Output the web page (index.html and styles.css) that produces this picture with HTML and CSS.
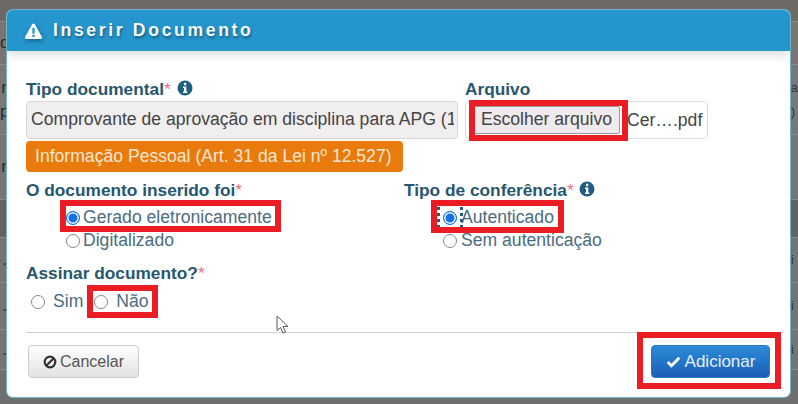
FILE: index.html
```html
<!DOCTYPE html>
<html lang="pt-br">
<head>
    <meta charset="UTF-8">
    <meta name="viewport" content="width=device-width, initial-scale=1.0">
    <title>Inserir Documento</title>
    <link rel="stylesheet" href="styles.css">
</head>
<body>

    <!-- Página escurecida atrás do modal -->
    <div class="page">
        <div class="page-row row-a"></div>
        <div class="page-row row-b"><span class="left-txt">d</span></div>
        <div class="page-row row-c"><span class="left-txt">r<br>p</span><span class="right-txt">a<br>)</span></div>
        <div class="page-row row-d"><span class="left-txt">r</span></div>
        <div class="page-row row-e"></div>
        <div class="page-row row-f"><span class="left-txt">.</span><span class="right-txt">i</span></div>
        <div class="page-row row-g"><span class="left-txt">.</span><span class="right-txt">i</span></div>
        <div class="page-row row-h"><span class="left-txt">.</span><span class="right-txt">i</span></div>
    </div>

    <div class="modal">
        <div class="modal-header">
            <svg class="icon-warning" viewBox="0 0 20 18"><path d="M10 0.5c.7 0 1.200.4 1.500 1l8 14.200c.6 1.100-.1 2.300-1.400 2.300H1.900C.6 18-.1 16.800.5 15.700l8-14.200c.3-.6.800-1 1.500-1z"/><rect class="cut" x="8.700" y="5.500" width="2.600" height="6.500"/><rect class="cut" x="8.700" y="13.300" width="2.600" height="2.600"/></svg>
            <h4>Inserir Documento</h4>
        </div>

        <div class="modal-body">
            <div class="row-top">
                <div class="field-tipo">
                    <label class="field-label">Tipo documental<span class="req">*</span> <svg class="icon-info" viewBox="0 0 16 16"><circle cx="8" cy="8" r="7.500"/><rect class="cut" x="6.900" y="2.800" width="2.400" height="2.400"/><path class="cut" d="M6 6.500h3.300v5h1v1.500H6v-1.500h1v-3.500H6z"/></svg></label>
                    <div class="select-box"><span class="select-text">Comprovante de aprovação em disciplina para APG (1</span></div>
                    <div class="tag-orange">Informação Pessoal (Art. 31 da Lei nº 12.527)</div>
                </div>
                <div class="field-arquivo">
                    <label class="field-label">Arquivo</label>
                    <div class="file-box">
                        <span class="file-btn">Escolher arquivo</span>
                        <span class="file-name">Cer….pdf</span>
                    </div>
                </div>
            </div>

            <div class="row-radios">
                <div class="col-gerado">
                    <label class="field-label">O documento inserido foi<span class="req">*</span></label>
                    <div class="radio-list">
                        <div class="radio-item"><span class="radio checked"></span>Gerado eletronicamente</div>
                        <div class="radio-item"><span class="radio"></span>Digitalizado</div>
                    </div>
                </div>
                <div class="col-conf">
                    <label class="field-label">Tipo de conferência<span class="req">*</span> <svg class="icon-info" viewBox="0 0 16 16"><circle cx="8" cy="8" r="7.500"/><rect class="cut" x="6.900" y="2.800" width="2.400" height="2.400"/><path class="cut" d="M6 6.500h3.300v5h1v1.500H6v-1.500h1v-3.500H6z"/></svg></label>
                    <div class="radio-list list-conf">
                        <div class="radio-item"><span class="radio checked focused"></span>Autenticado</div>
                        <div class="radio-item"><span class="radio"></span>Sem autenticação</div>
                    </div>
                </div>
            </div>

            <div class="field-assinar">
                <label class="field-label">Assinar documento?<span class="req">*</span></label>
                <div class="radio-inline">
                    <span class="radio"></span><span class="txt-sim">Sim</span>
                    <span class="radio radio-nao"></span><span class="txt-nao">Não</span>
                </div>
            </div>
        </div>

        <div class="modal-footer">
            <button class="btn btn-cancel"><svg class="icon-ban" viewBox="0 0 14 14"><circle cx="7" cy="7" r="5.300"/><path d="M3.200 10.800l7.600-7.600"/></svg>Cancelar</button>
            <button class="btn btn-add"><svg class="icon-check" viewBox="0 0 16 14"><path d="M1.800 7.500l4 4L14.200 3"/></svg>Adicionar</button>
        </div>

        <!-- Marcações vermelhas por cima da captura -->
        <div class="mark mark-file"></div>
        <div class="mark mark-gerado"></div>
        <div class="mark mark-autent"></div>
        <div class="mark mark-nao"></div>
        <div class="mark mark-add"></div>

        <!-- Cursor do mouse -->
        <svg class="cursor" viewBox="0 0 14 20"><path d="M1 1v14.500l3.500-3 2.500 5.500 2.500-1-2.500-5.500h5z"/></svg>
    </div>

</body>
</html>
```

FILE: styles.css
```css
/* Geral */
body {
    margin: 0;
    width: 798px;
    height: 404px;
    overflow: hidden;
    background-color: #6f6f6f;
    font-family: "Liberation Sans", Arial, sans-serif;
    position: relative;
}

/* Restos da página atrás do modal */
.page-row {
    display: flex;
    justify-content: space-between;
    align-items: center;
    box-sizing: border-box;
    border-bottom: 1px solid #8a8a8a;
    font-size: 17px;
    line-height: 24px;
    color: #2a2a2a;
}

.left-txt {
    width: 7px;
    text-align: right;
}

.right-txt {
    width: 7px;
    margin-left: auto;
    font-size: 12px;
    color: #333;
}

.row-a { height: 22px; background-color: #6d6966; }
.row-b { height: 43px; background-color: #7a7572; }
.row-c { height: 70px; background-color: #787878; }
.row-d { height: 65px; background-color: #767676; }
.row-e { height: 38px; background-color: #636363; }
.row-f { height: 45px; background-color: #747474; }
.row-g { height: 47px; background-color: #747474; }
.row-h { height: 40px; background-color: #747474; }

/* Modal */
.modal {
    position: absolute;
    left: 7px;
    top: 10px;
    width: 783px;
    height: 387px;
    background-color: #fff;
    border-radius: 6px;
    box-shadow: 0 0 0 1px #6fb4c8;
    overflow: hidden;
}

.modal-header {
    height: 41px;
    background-color: #2596cd;
    box-shadow: 0 4px 10px rgba(0, 0, 0, 0.14);
    display: flex;
    align-items: center;
    padding-left: 17px;
    gap: 10px;
    color: #fff;
}

.modal-header h4 {
    margin: 0;
    font-size: 17.600px;
    font-weight: bold;
    letter-spacing: 2.650px;
    color: #f4f9fc;
    text-shadow: 1px 2px 3px rgba(0, 0, 0, 0.4);
}

.icon-warning {
    width: 19px;
    height: 16px;
    fill: #fff;
    filter: drop-shadow(1px 2px 2px rgba(0, 0, 0, 0.35));
}

.icon-warning .cut {
    fill: #2596cd;
}

.modal-body {
    padding: 29px 19px 0;
}

.field-label {
    display: block;
    font-size: 17.300px;
    font-weight: bold;
    line-height: 18px;
    color: #27566f;
    white-space: nowrap;
}

.req {
    color: #e8707f;
    font-weight: normal;
}

.icon-info {
    width: 16px;
    height: 16px;
    vertical-align: -1px;
    margin-left: 1px;
    fill: #1f5e80;
}

.icon-info .cut {
    fill: #fff;
}

/* Linha de cima */
.row-top {
    display: flex;
    gap: 8px;
}

.field-tipo {
    width: 432px;
}

.select-box {
    box-sizing: border-box;
    height: 38px;
    margin-top: 3px;
    padding: 0 3px 0 4px;
    line-height: 35px;
    font-size: 17.600px;
    color: #444;
    background-color: #f0eeee;
    border: 1px solid #d6d6d6;
    border-radius: 4px;
}

/* O texto do select é cortado antes da borda direita */
.select-text {
    display: block;
    white-space: nowrap;
    overflow: hidden;
}

.tag-orange {
    width: 377px;
    height: 31px;
    margin-top: 2px;
    padding-left: 9px;
    box-sizing: border-box;
    line-height: 30px;
    font-size: 17.600px;
    color: #f6e6d2;
    background-color: #e87b0c;
    border-radius: 4px;
    white-space: nowrap;
}

.field-arquivo {
    width: 243px;
    margin-left: -1px;
}

.file-box {
    box-sizing: border-box;
    width: 243px;
    height: 38px;
    margin-top: 3px;
    display: flex;
    align-items: center;
    padding-left: 7px;
    border: 1px solid #dcdcdc;
    border-radius: 4px;
    font-size: 17.600px;
    color: #444;
}

.file-btn {
    box-sizing: border-box;
    width: 147px;
    height: 28px;
    line-height: 25px;
    text-align: center;
    background-color: #eeeaee;
    border: 1px solid #9a9a9a;
    border-radius: 2px;
    white-space: nowrap;
}

.file-name {
    margin-left: 7px;
    white-space: nowrap;
}

/* Radios */
.row-radios {
    display: flex;
    margin-top: 9px;
}

.col-gerado {
    width: 378px;
}

.radio-list {
    margin-top: 7px;
    padding-left: 40px;
}

.list-conf {
    padding-left: 39px;
}

.list-conf .radio {
    margin-right: 4px;
}

.radio-item {
    display: flex;
    align-items: center;
    height: 23px;
    font-size: 17.600px;
    color: #4c6c80;
    white-space: nowrap;
}

.radio {
    position: relative;
    box-sizing: border-box;
    display: inline-block;
    flex: none;
    width: 14px;
    height: 14px;
    margin-right: 3px;
    border: 1px solid #8a8a8a;
    border-radius: 50%;
    background-color: #fff;
}

.radio.checked {
    border: 1.500px solid #1170e8;
    box-shadow: inset 0 0 0 1.500px #fff;
    background-color: #1170e8;
}

/* Contorno de foco pontilhado do rádio */
.radio.focused::after {
    content: "";
    position: absolute;
    left: -7px;
    top: -5px;
    width: 20px;
    height: 20px;
    border-left: 3px dotted #1f5e80;
    border-right: 3px dotted #1f5e80;
    border-bottom: 1px dotted #999;
}

.field-assinar {
    margin-top: 12px;
}

.radio-inline {
    display: flex;
    align-items: center;
    height: 23px;
    margin-top: 8px;
    padding-left: 5px;
    font-size: 17.600px;
    color: #4c6c80;
}

.txt-sim {
    margin-left: 5px;
}

.radio-nao {
    margin-left: 11px;
}

.txt-nao {
    margin-left: 5px;
}

/* Rodapé */
.modal-footer {
    position: absolute;
    left: 19px;
    right: 20px;
    top: 322px;
    height: 54px;
    border-top: 1px solid #cfcfcf;
    display: flex;
    justify-content: space-between;
    align-items: flex-start;
    padding-top: 12px;
    box-sizing: border-box;
}

.btn {
    height: 33px;
    box-sizing: border-box;
    font-family: inherit;
    border-radius: 4px;
    display: flex;
    align-items: center;
    padding: 0;
    justify-content: center;
}

.btn-cancel {
    width: 111px;
    margin-left: 2px;
    font-size: 16px;
    color: #555;
    background: linear-gradient(#ffffff, #e2e2e2);
    border: 1px solid #cccccc;
    gap: 3px;
}

.btn-add {
    width: 119px;
    font-size: 17px;
    color: #e8f0fa;
    background: linear-gradient(#2a8bd6, #1c5fb8);
    border: 1px solid #2a79c4;
    gap: 4px;
}

.icon-ban {
    width: 14px;
    height: 14px;
    fill: none;
    stroke: #333;
    stroke-width: 2.200;
}

.icon-check {
    width: 15px;
    height: 13px;
    fill: none;
    stroke: #fff;
    stroke-width: 3;
}

/* Marcações vermelhas */
.mark {
    position: absolute;
    box-sizing: border-box;
    border: 6px solid #ec1c24;
}

.mark-file {
    left: 462px;
    top: 90px;
    width: 159px;
    height: 41px;
}

.mark-gerado {
    left: 53px;
    top: 190px;
    width: 221px;
    height: 32px;
}

.mark-autent {
    left: 424px;
    top: 190px;
    width: 133px;
    height: 33px;
}

.mark-nao {
    left: 80px;
    top: 275px;
    width: 71px;
    height: 33px;
}

.mark-add {
    left: 630px;
    top: 322px;
    width: 144px;
    height: 57px;
}

.cursor {
    position: absolute;
    left: 269px;
    top: 305px;
    width: 14px;
    height: 20px;
    fill: #fff;
    stroke: #555;
    stroke-width: 1;
}
```
